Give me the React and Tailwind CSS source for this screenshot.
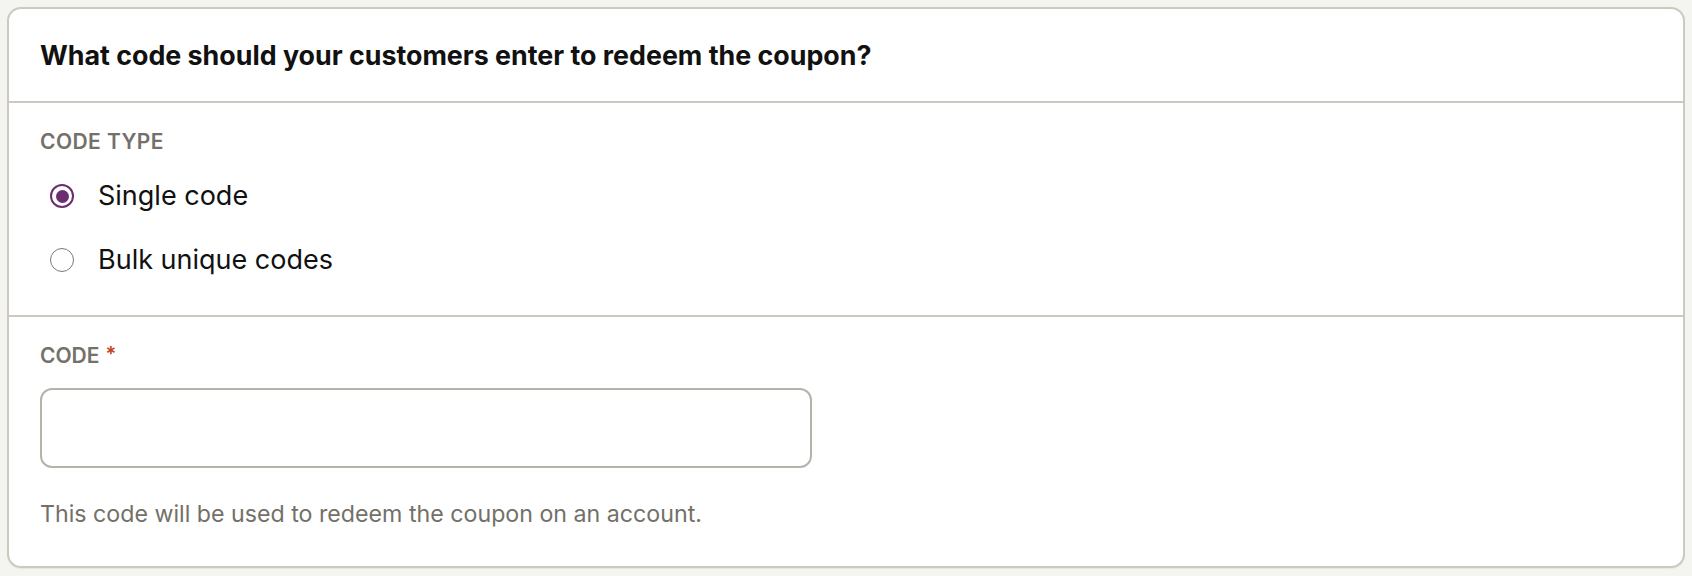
import { useState } from "react";

const options = [
  { id: "single", label: "Single code" },
  { id: "bulk", label: "Bulk unique codes" },
];

function Radio({ checked }) {
  return checked ? (
    <span className="flex h-[24px] w-[24px] items-center justify-center rounded-full border-2 border-[#6b2c70] bg-white">
      <span className="h-[13px] w-[13px] rounded-full bg-[#6b2c70]" />
    </span>
  ) : (
    <span className="h-[24px] w-[24px] rounded-full border-[1.5px] border-[#7c7a76] bg-white" />
  );
}

export default function App() {
  const [codeType, setCodeType] = useState("single");
  const [code, setCode] = useState("");

  return (
    <div
      className="min-h-screen bg-[#f4f4f0] p-[7px]"
      style={{ fontFamily: "Inter, 'Liberation Sans', sans-serif" }}
    >
      <div className="rounded-[14px] border-2 border-[#cdc9c1] bg-white shadow-[0_1px_1px_rgba(0,0,0,0.06)]">
        {/* Header */}
        <div className="border-b-2 border-[#cdc9c1] px-[31px] py-[28px]">
          <h2 className="text-[26.8px] font-bold leading-[36px] text-[#111111]">
            What code should your customers enter to redeem the coupon?
          </h2>
        </div>

        {/* Code type */}
        <div className="border-b-2 border-[#cdc9c1] px-[31px] pt-[25px] pb-[31px]">
          <div className="text-[21px] font-semibold uppercase leading-[28px] tracking-[0.02em] text-[#73716a]">
            Code type
          </div>
          <div className="mt-[16px] flex flex-col gap-[16px]">
            {options.map((opt) => (
              <button
                key={opt.id}
                type="button"
                onClick={() => setCodeType(opt.id)}
                className="flex h-[48px] items-center gap-[24px] pl-[10px] text-left"
              >
                <Radio checked={codeType === opt.id} />
                <span className="text-[27px] leading-[48px] text-[#111111]">
                  {opt.label}
                </span>
              </button>
            ))}
          </div>
        </div>

        {/* Code */}
        <div className="px-[31px] pt-[25px] pb-[36px]">
          <label className="flex items-start text-[21px] font-semibold leading-[28px] text-[#73716a]">
            CODE
            <span className="ml-[6px] text-[20px] leading-[24px] text-[#c2431c]">*</span>
          </label>
          <input
            value={code}
            onChange={(e) => setCode(e.target.value)}
            className="mt-[18px] block h-[80px] w-[772px] rounded-[12px] border-2 border-[#b7b3aa] bg-white px-[16px] text-[24px] outline-none"
          />
          <p className="mt-[30px] text-[23.2px] leading-[32px] text-[#737068]">
            This code will be used to redeem the coupon on an account.
          </p>
        </div>
      </div>
    </div>
  );
}
